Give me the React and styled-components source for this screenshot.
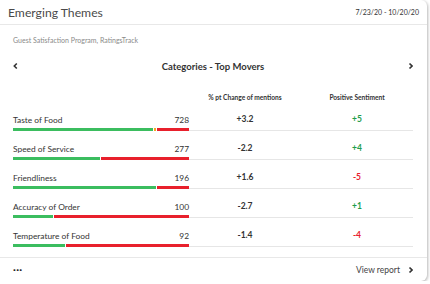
import styled, { createGlobalStyle } from "styled-components"

const GlobalStyle = createGlobalStyle`
    body {
        margin: 0;
        background: #ffffff;
        font-family: Lato, "Liberation Sans", sans-serif;
    }
`

const Card = styled.div`
    width: 427px;
    height: 281px;
    background: #fff;
    border-radius: 0 6px 6px 0;
    box-shadow: 1px 1px 3px rgba(0, 0, 0, 0.28);
    display: flex;
    flex-direction: column;
    overflow: hidden;
`

const Header = styled.div`
    height: 24px;
    display: flex;
    align-items: center;
    justify-content: space-between;
    padding: 0 8px;
    border-bottom: 1px solid #e8e8e8;
`

const Title = styled.h2`
    margin: 0;
    font-size: 12.2px;
    font-weight: 400;
    color: #4a4a4a;
`

const DateRange = styled.span`
    font-size: 7px;
    color: #333;
`

const Body = styled.div`
    flex: 1;
    padding: 0 14px 0 13px;
`

const Subtitle = styled.p`
    margin: 11px 0 0;
    font-size: 7px;
    color: #8a8a8a;
`

const Nav = styled.div`
    margin-top: 14px;
    display: flex;
    align-items: center;
    justify-content: space-between;
    height: 16px;
`

const NavTitle = styled.span`
    font-size: 9.5px;
    font-weight: 700;
    color: #333;
`

const Chevron = styled.svg`
    width: 8px;
    height: 8px;
    flex-shrink: 0;
`

const Grid = styled.div`
    display: grid;
    grid-template-columns: 176px 112px 112px;
    margin-bottom: 1px;
`

const HeadCell = styled.div`
    margin-top: 19px;
    font-size: 6.6px;
    font-weight: 700;
    color: #333;
    text-align: center;
`

const Row = styled.div`
    display: grid;
    grid-template-columns: 176px 112px 112px;
    height: 29px;
    align-items: end;
`

const LabelCell = styled.div`
    display: flex;
    flex-direction: column;
`

const LabelLine = styled.div`
    display: flex;
    justify-content: space-between;
    font-size: 8.4px;
    color: #333;
    line-height: 11px;
    margin-bottom: 2px;
`

const Bar = styled.div`
    display: flex;
    height: 3px;
`

const Segment = styled.div`
    height: 3px;
    background: ${p => p.$color};
    margin-right: ${p => (p.$gap ? "1px" : "0")};
`

const StatCell = styled.div`
    height: 16px;
    border-bottom: 1px solid #e6e6e6;
    text-align: center;
    font-size: 8.5px;
    font-weight: 700;
    color: ${p => p.$color || "#333"};
    line-height: 10px;
`

const Footer = styled.div`
    height: 23px;
    border-top: 1px solid #e8e8e8;
    display: flex;
    align-items: center;
    justify-content: space-between;
    padding: 0 14px 0 13px;
`

const Dots = styled.span`
    font-size: 12px;
    font-weight: 900;
    letter-spacing: 0.3px;
    color: #222;
    line-height: 10px;
    margin-top: -6px;
`

const ViewLink = styled.span`
    display: flex;
    align-items: center;
    gap: 5px;
    font-size: 8.5px;
    color: #444;
`

const GREEN = "#3bbd5f"
const RED = "#e8202c"
const ORANGE = "#f5a623"

const rows = [
    { name: "Taste of Food", count: 728, segs: [[142, GREEN], [2, ORANGE], [32, RED]], change: "+3.2", sent: "+5", pos: true },
    { name: "Speed of Service", count: 277, segs: [[87, GREEN], [89, RED]], change: "-2.2", sent: "+4", pos: true },
    { name: "Friendliness", count: 196, segs: [[144, GREEN], [32, RED]], change: "+1.6", sent: "-5", pos: false },
    { name: "Accuracy of Order", count: 100, segs: [[40, GREEN], [136, RED]], change: "-2.7", sent: "+1", pos: true },
    { name: "Temperature of Food", count: 92, segs: [[52, GREEN], [124, RED]], change: "-1.4", sent: "-4", pos: false },
]

function Left() {
    return (
        <Chevron viewBox="0 0 8 8">
            <path d="M3.8 1.5 L1.3 4 L3.8 6.5" fill="none" stroke="#333" strokeWidth="1.6" />
        </Chevron>
    )
}

function Right() {
    return (
        <Chevron viewBox="0 0 8 8">
            <path d="M4.5 1.5 L7 4 L4.5 6.5" fill="none" stroke="#333" strokeWidth="1.6" />
        </Chevron>
    )
}

export default function App() {
    return (
        <>
            <GlobalStyle />
            <Card>
                <Header>
                    <Title>Emerging Themes</Title>
                    <DateRange>7/23/20 - 10/20/20</DateRange>
                </Header>
                <Body>
                    <Subtitle>Guest Satisfaction Program, RatingsTrack</Subtitle>
                    <Nav>
                        <Left />
                        <NavTitle>Categories - Top Movers</NavTitle>
                        <Right />
                    </Nav>
                    <Grid>
                        <div />
                        <HeadCell>% pt Change of mentions</HeadCell>
                        <HeadCell>Positive Sentiment</HeadCell>
                    </Grid>
                    {rows.map(r => (
                        <Row key={r.name}>
                            <LabelCell>
                                <LabelLine>
                                    <span>{r.name}</span>
                                    <span>{r.count}</span>
                                </LabelLine>
                                <Bar>
                                    {r.segs.map(([w, c], i) => (
                                        <Segment key={i} $color={c} $gap={i < r.segs.length - 1} style={{ width: w }} />
                                    ))}
                                </Bar>
                            </LabelCell>
                            <StatCell>{r.change}</StatCell>
                            <StatCell $color={r.pos ? "#1e9e4c" : RED}>{r.sent}</StatCell>
                        </Row>
                    ))}
                </Body>
                <Footer>
                    <Dots>...</Dots>
                    <ViewLink>
                        View report
                        <Right />
                    </ViewLink>
                </Footer>
            </Card>
        </>
    )
}
